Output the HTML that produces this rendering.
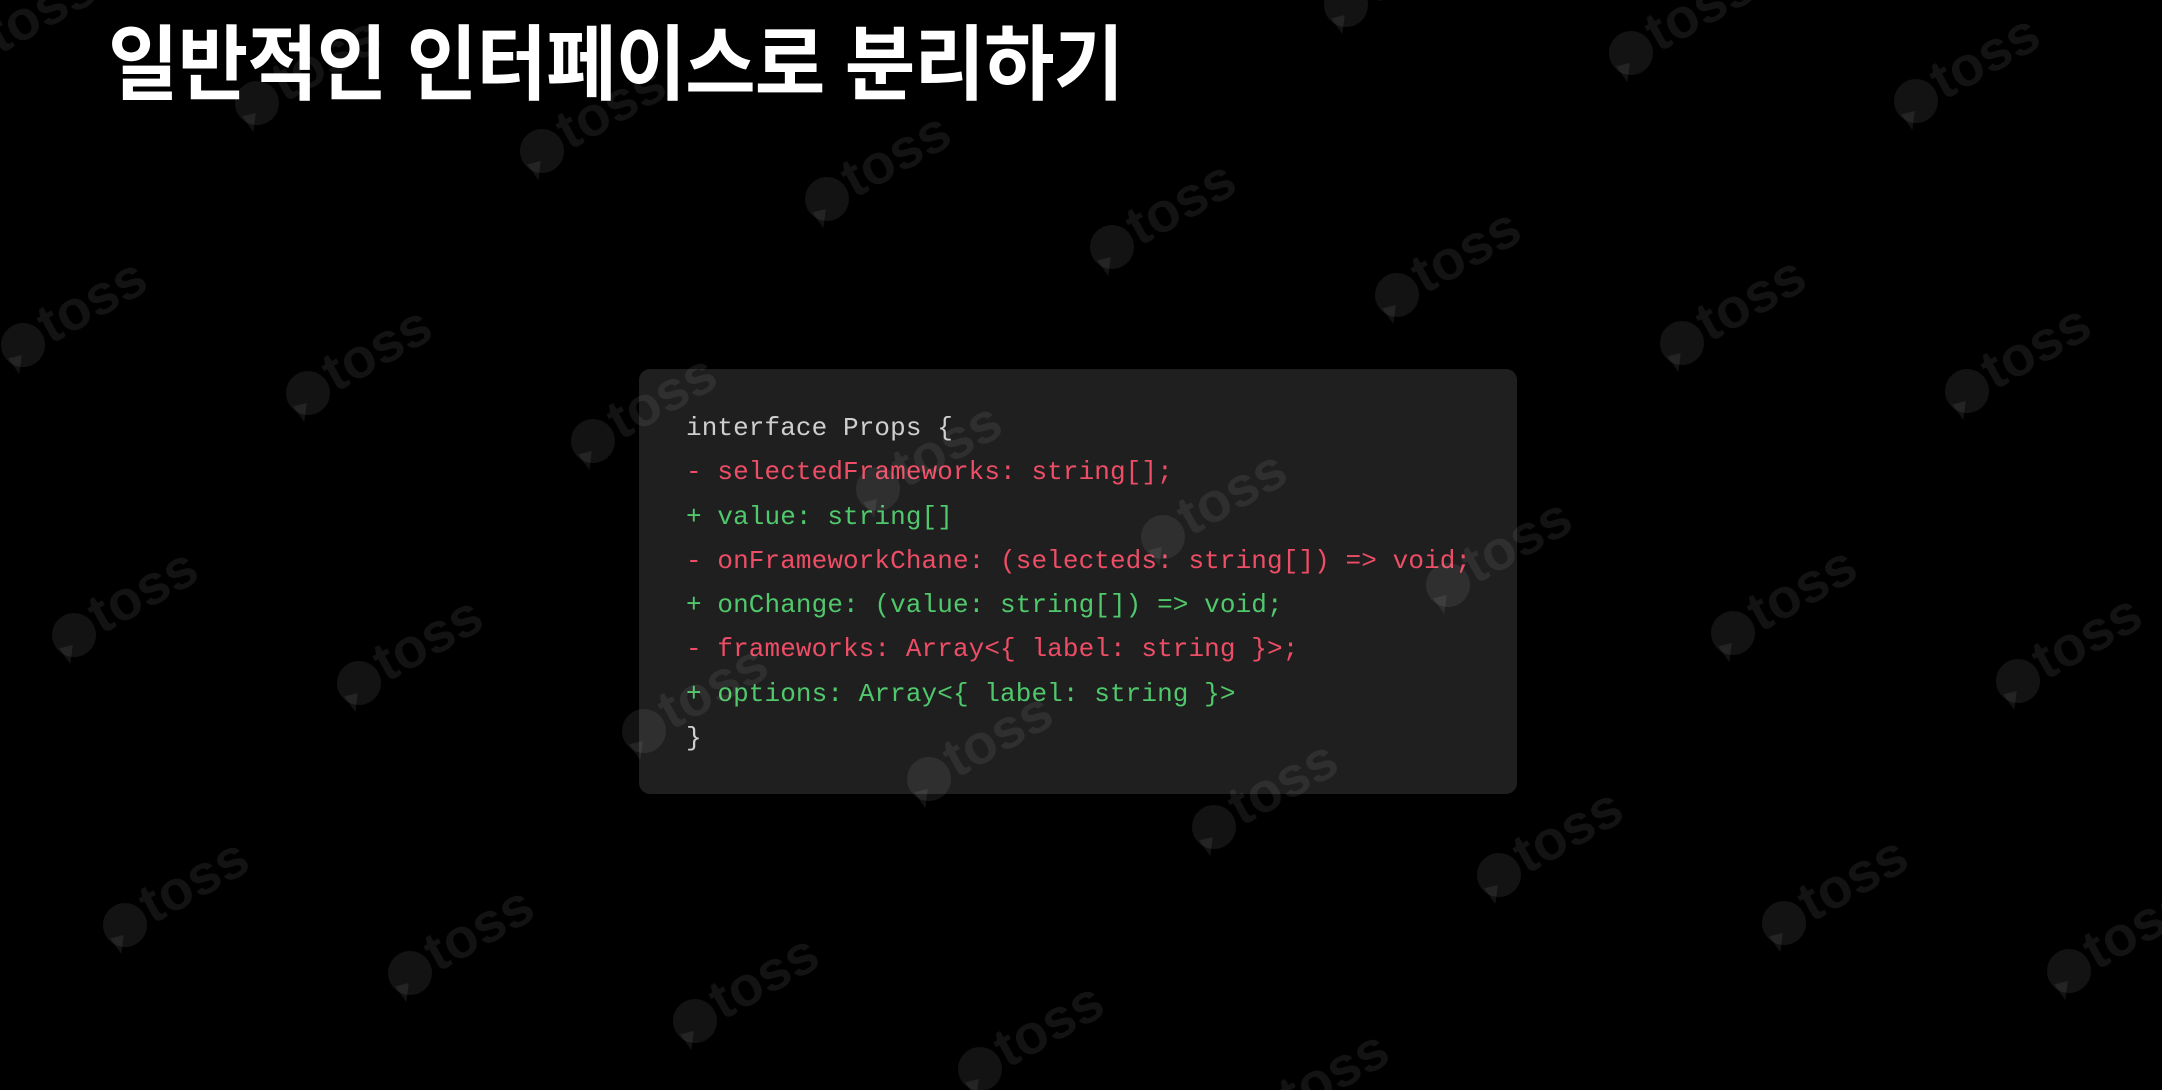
<!DOCTYPE html>
<html><head><meta charset="utf-8"><style>
html,body{margin:0;padding:0;background:#000;width:2162px;height:1090px;overflow:hidden}
#root{position:relative;width:2162px;height:1090px;overflow:hidden;background:#000}
h1{position:absolute;left:108px;top:6px;margin:0;font-family:"Liberation Sans","Noto Sans CJK KR",sans-serif;font-weight:700;font-size:82px;color:#fff;letter-spacing:-1px;line-height:120px;transform:scaleX(0.935);transform-origin:0 0;white-space:nowrap}
.box{position:absolute;left:639px;top:369px;width:878px;height:425px;background:#1f1f1f;border-radius:11px}
pre{position:absolute;left:686px;top:406px;margin:0;font-family:"Liberation Mono",monospace;font-size:26px;line-height:44.3px;color:#cfcfcf;letter-spacing:0.1px}
.r{color:#ee4d66}.g{color:#50c86c}
.wm{position:absolute;width:0;height:0;pointer-events:none;transform:rotate(-29deg)}
.wm .b{position:absolute;left:-22px;top:-22px;width:44px;height:44px;border-radius:50%;background:rgba(255,255,255,0.075)}
.wm .b:after{content:"";position:absolute;left:0;top:28px;border-left:7px solid transparent;border-right:7px solid transparent;border-top:18px solid rgba(255,255,255,0.075);transform:rotate(15deg)}
.wm span{position:absolute;left:24px;top:-36px;font-family:"Liberation Sans",sans-serif;font-weight:700;font-size:56px;color:rgba(255,255,255,0.075);white-space:nowrap;line-height:60px}
</style></head><body><div id="root">
<div class="box"></div>
<h1>일반적인 인터페이스로 분리하기</h1>
<pre>interface Props {
<span class="r">- selectedFrameworks: string[];</span>
<span class="g">+ value: string[]</span>
<span class="r">- onFrameworkChane: (selecteds: string[]) =&gt; void;</span>
<span class="g">+ onChange: (value: string[]) =&gt; void;</span>
<span class="r">- frameworks: Array&lt;{ label: string }&gt;;</span>
<span class="g">+ options: Array&lt;{ label: string }&gt;</span>
}</pre>
<div id="w"></div>
</div>
<script>
var w=document.getElementById('w'),h='';
for(var i=-6;i<12;i++)for(var j=-3;j<6;j++){
var x=23+285*i+51*j,y=345+48*i+290*j;
if(x<-150||x>2250||y<-80||y>1130)continue;
h+='<div class="wm" style="left:'+x+'px;top:'+y+'px"><div class="b"></div><span>toss</span></div>';}
w.innerHTML=h;
</script>
</body></html>
